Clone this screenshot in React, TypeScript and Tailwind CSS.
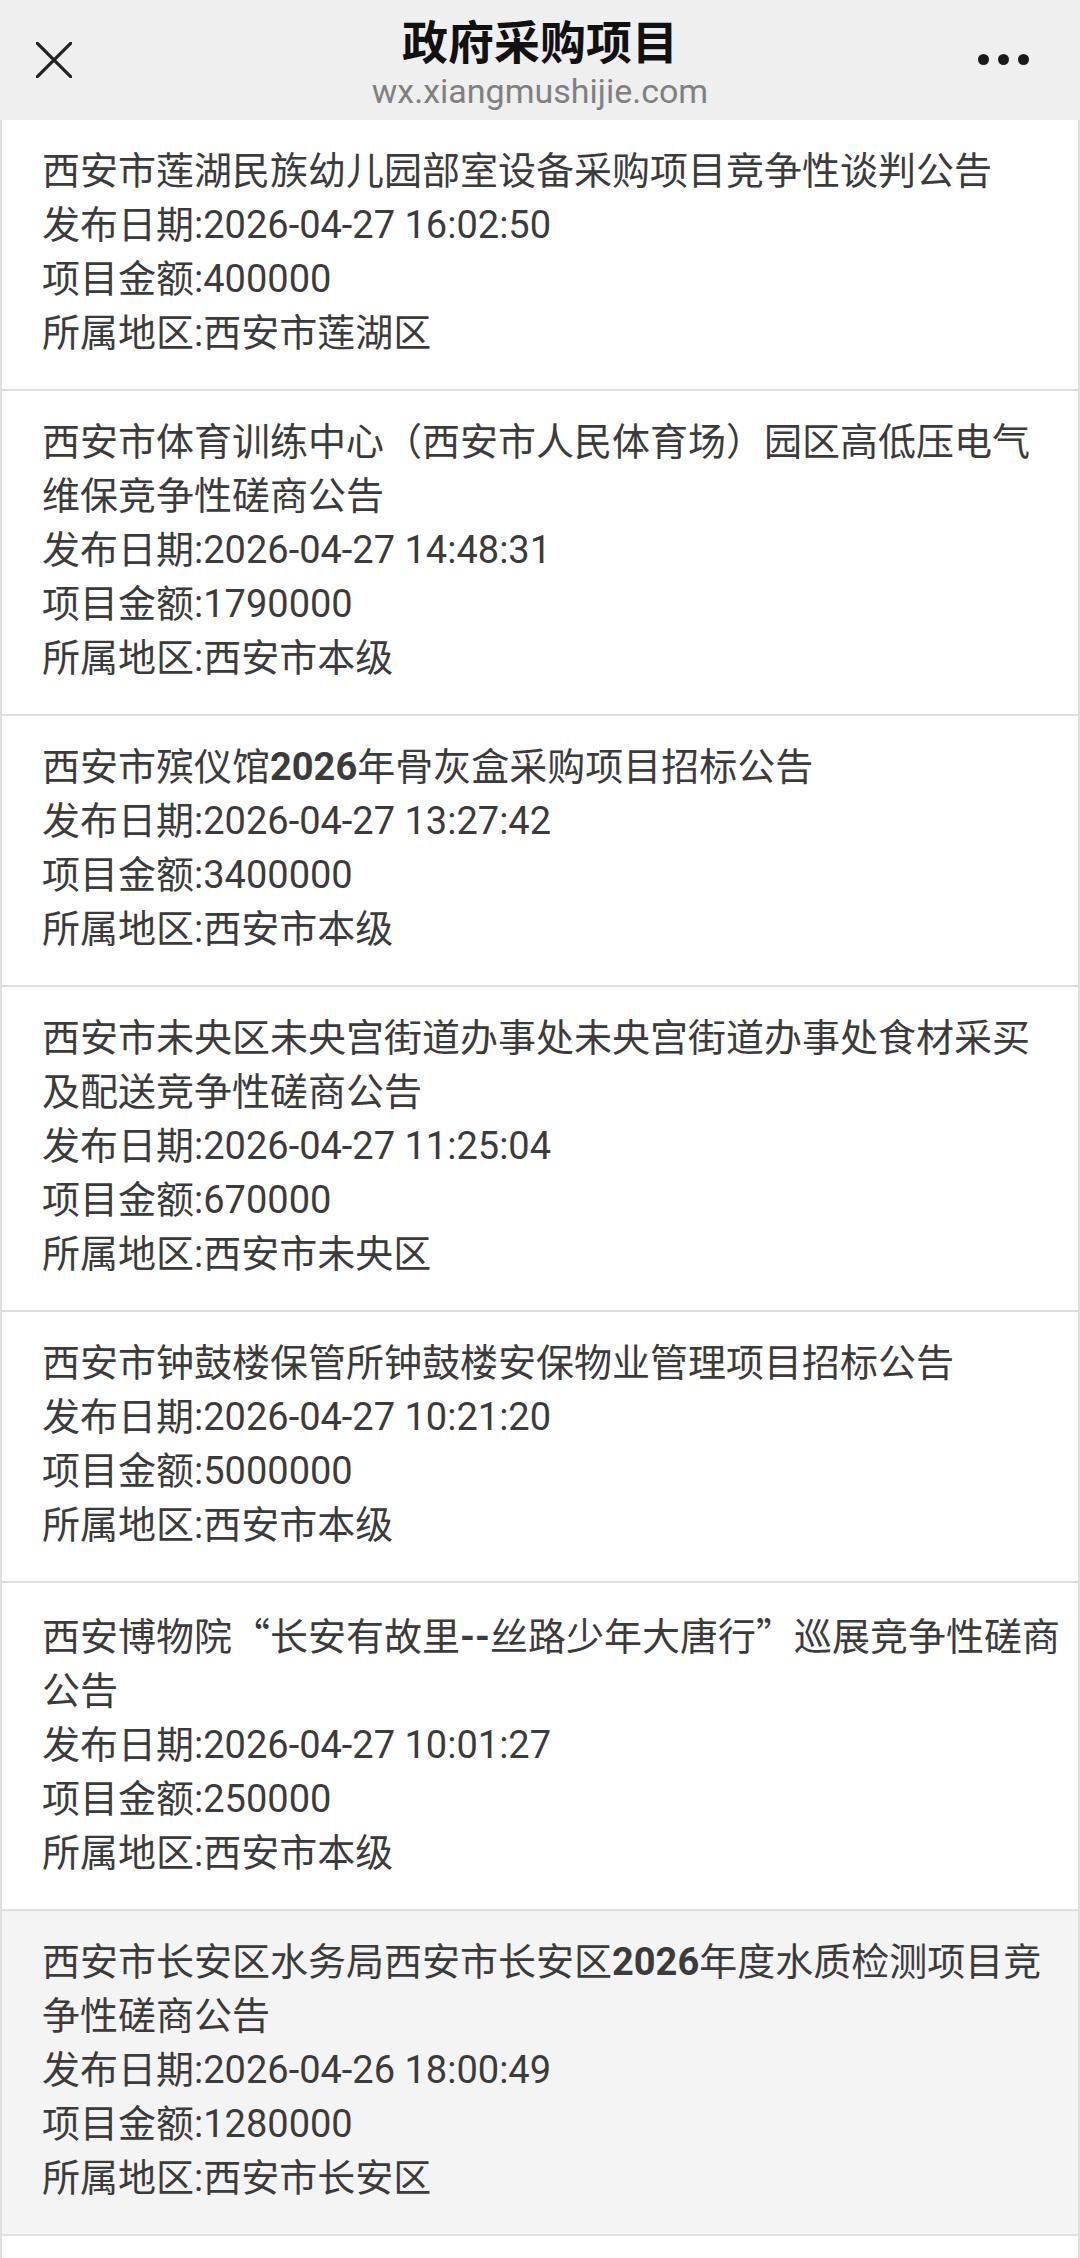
import React from "react";

type Item = {
  title: React.ReactNode;
  date: string;
  amount: string;
  region: string;
  active?: boolean;
};

const B = ({ children }: { children: React.ReactNode }) => (
  <span className="font-bold">{children}</span>
);

const Q = ({ children }: { children: React.ReactNode }) => (
  <span className="font-['Noto_Sans_CJK_SC']">{children}</span>
);

const items: Item[] = [
  {
    title: "西安市莲湖民族幼儿园部室设备采购项目竞争性谈判公告",
    date: "2026-04-27 16:02:50",
    amount: "400000",
    region: "西安市莲湖区",
  },
  {
    title: "西安市体育训练中心（西安市人民体育场）园区高低压电气维保竞争性磋商公告",
    date: "2026-04-27 14:48:31",
    amount: "1790000",
    region: "西安市本级",
  },
  {
    title: (
      <>
        西安市殡仪馆<B>2026</B>年骨灰盒采购项目招标公告
      </>
    ),
    date: "2026-04-27 13:27:42",
    amount: "3400000",
    region: "西安市本级",
  },
  {
    title: "西安市未央区未央宫街道办事处未央宫街道办事处食材采买及配送竞争性磋商公告",
    date: "2026-04-27 11:25:04",
    amount: "670000",
    region: "西安市未央区",
  },
  {
    title: "西安市钟鼓楼保管所钟鼓楼安保物业管理项目招标公告",
    date: "2026-04-27 10:21:20",
    amount: "5000000",
    region: "西安市本级",
  },
  {
    title: (
      <>
        西安博物院<Q>“</Q>长安有故里<B>--</B>丝路少年大唐行<Q>”</Q>巡展竞争性磋商公告
      </>
    ),
    date: "2026-04-27 10:01:27",
    amount: "250000",
    region: "西安市本级",
  },
  {
    title: (
      <>
        西安市长安区水务局西安市长安区<B>2026</B>年度水质检测项目竞争性磋商公告
      </>
    ),
    date: "2026-04-26 18:00:49",
    amount: "1280000",
    region: "西安市长安区",
    active: true,
  },
];

function Row({ item }: { item: Item }) {
  return (
    <div
      className={`border-x-2 border-b-2 border-[#e0e0e0] pl-[40px] pr-[14px] pt-[24px] pb-[29px] text-[38px] leading-[54px] text-[#3b3b3b] ${
        item.active ? "bg-[#f4f4f4]" : "bg-white"
      }`}
    >
      <div>{item.title}</div>
      <div>发布日期:{item.date}</div>
      <div>项目金额:{item.amount}</div>
      <div>所属地区:{item.region}</div>
    </div>
  );
}

export default function App() {
  return (
    <div className="w-[1080px] h-[2258px] overflow-hidden bg-white font-['Roboto','Noto_Sans_CJK_SC',sans-serif]">
      <header className="h-[120px] bg-[#efefef] grid grid-cols-[1fr_auto_1fr] items-start">
        <div className="pl-[36px] pt-[42px]">
          <svg width="36" height="36" viewBox="0 0 36 36">
            <path
              d="M1 1 L35 35 M35 1 L1 35"
              stroke="#232323"
              strokeWidth="3.2"
              strokeLinecap="square"
              fill="none"
            />
          </svg>
        </div>
        <div className="flex flex-col items-center pt-[12px]">
          <div className="text-[46px] leading-[54px] font-bold text-[#111111] font-['Noto_Sans_CJK_SC',sans-serif]">
            政府采购项目
          </div>
          <div className="mt-[5px] text-[34px] leading-[40px] text-[#808080]">
            wx.xiangmushijie.com
          </div>
        </div>
        <div className="flex justify-end pr-[51px] pt-[54px] gap-[9px]">
          <span className="w-[11px] h-[11px] rounded-full bg-[#1a1a1a]" />
          <span className="w-[11px] h-[11px] rounded-full bg-[#1a1a1a]" />
          <span className="w-[11px] h-[11px] rounded-full bg-[#1a1a1a]" />
        </div>
      </header>
      <main>
        {items.map((it, i) => (
          <Row key={i} item={it} />
        ))}
        <div className="h-[200px] border-x-2 border-[#e0e0e0] bg-white" />
      </main>
    </div>
  );
}
